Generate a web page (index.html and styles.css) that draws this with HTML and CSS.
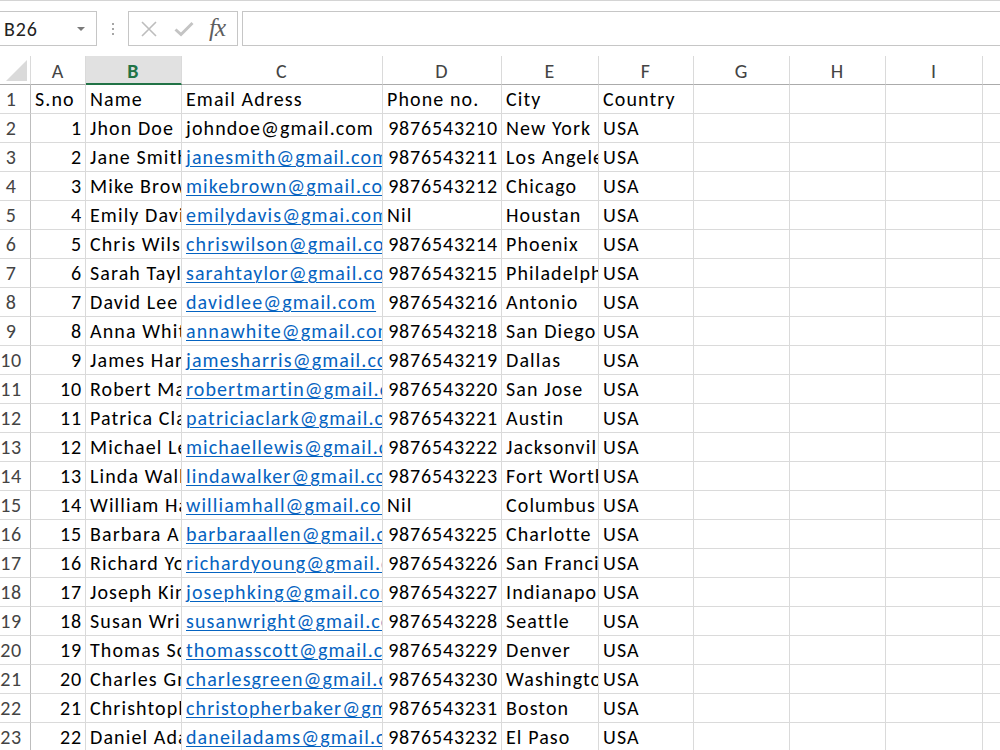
FILE: index.html
```html
<!DOCTYPE html>
<html lang="en">
<head>
    <meta charset="UTF-8">
    <meta name="viewport" content="width=device-width, initial-scale=1.0">
    <title>Contacts.xlsx</title>
    <link rel="stylesheet" href="styles.css">
</head>
<body>

    <div class="formula-bar">
        <div class="name-box">
            <span>B26</span>
            <svg class="name-arrow" width="8" height="5" viewBox="0 0 8 5"><path d="M0 0 L8 0 L4 4 Z" fill="#7a7a7a"/></svg>
        </div>
        <svg class="grip" width="4" height="14" viewBox="0 0 4 14">
            <rect x="1" y="1" width="2" height="2" fill="#a6a6a6"/>
            <rect x="1" y="6" width="2" height="2" fill="#a6a6a6"/>
            <rect x="1" y="11" width="2" height="2" fill="#a6a6a6"/>
        </svg>
        <div class="fx-buttons">
            <svg width="18" height="18" viewBox="0 0 18 18"><path d="M2 2 L16 16 M16 2 L2 16" stroke="#bdbdbd" stroke-width="1.6" fill="none"/></svg>
            <svg width="20" height="16" viewBox="0 0 20 16"><path d="M1.5 8.5 L7 13.5 L18.5 2" stroke="#c4c4c4" stroke-width="3" fill="none"/></svg>
            <span class="fx">fx</span>
        </div>
        <div class="formula-input"></div>
    </div>

    <table class="sheet">
        <thead>
            <tr>
                <th class="corner"><span class="corner-tri"></span></th>
                <th>A</th>
                <th class="selected">B</th>
                <th>C</th>
                <th>D</th>
                <th>E</th>
                <th>F</th>
                <th>G</th>
                <th>H</th>
                <th>I</th>
                <th></th>
            </tr>
        </thead>
        <tbody>
            <tr><th>1</th><td>S.no</td><td>Name</td><td>Email Adress</td><td>Phone no.</td><td>City</td><td>Country</td><td></td><td></td><td></td><td></td></tr>
            <tr><th>2</th><td class="num">1</td><td>Jhon Doe</td><td>johndoe@gmail.com</td><td class="num">9876543210</td><td>New York</td><td>USA</td><td></td><td></td><td></td><td></td></tr>
            <tr><th>3</th><td class="num">2</td><td>Jane Smith</td><td class="link">janesmith@gmail.com</td><td class="num">9876543211</td><td>Los Angeles</td><td>USA</td><td></td><td></td><td></td><td></td></tr>
            <tr><th>4</th><td class="num">3</td><td>Mike Brown</td><td class="link">mikebrown@gmail.com</td><td class="num">9876543212</td><td>Chicago</td><td>USA</td><td></td><td></td><td></td><td></td></tr>
            <tr><th>5</th><td class="num">4</td><td>Emily Davis</td><td class="link">emilydavis@gmai.com</td><td>Nil</td><td>Houstan</td><td>USA</td><td></td><td></td><td></td><td></td></tr>
            <tr><th>6</th><td class="num">5</td><td>Chris Wilson</td><td class="link">chriswilson@gmail.com</td><td class="num">9876543214</td><td>Phoenix</td><td>USA</td><td></td><td></td><td></td><td></td></tr>
            <tr><th>7</th><td class="num">6</td><td>Sarah Taylor</td><td class="link">sarahtaylor@gmail.com</td><td class="num">9876543215</td><td>Philadelphia</td><td>USA</td><td></td><td></td><td></td><td></td></tr>
            <tr><th>8</th><td class="num">7</td><td>David Lee</td><td class="link">davidlee@gmail.com</td><td class="num">9876543216</td><td>Antonio</td><td>USA</td><td></td><td></td><td></td><td></td></tr>
            <tr><th>9</th><td class="num">8</td><td>Anna White</td><td class="link">annawhite@gmail.com</td><td class="num">9876543218</td><td>San Diego</td><td>USA</td><td></td><td></td><td></td><td></td></tr>
            <tr><th>10</th><td class="num">9</td><td>James Harris</td><td class="link">jamesharris@gmail.com</td><td class="num">9876543219</td><td>Dallas</td><td>USA</td><td></td><td></td><td></td><td></td></tr>
            <tr><th>11</th><td class="num">10</td><td>Robert Martin</td><td class="link">robertmartin@gmail.com</td><td class="num">9876543220</td><td>San Jose</td><td>USA</td><td></td><td></td><td></td><td></td></tr>
            <tr><th>12</th><td class="num">11</td><td>Patrica Clark</td><td class="link">patriciaclark@gmail.com</td><td class="num">9876543221</td><td>Austin</td><td>USA</td><td></td><td></td><td></td><td></td></tr>
            <tr><th>13</th><td class="num">12</td><td>Michael Lewis</td><td class="link">michaellewis@gmail.com</td><td class="num">9876543222</td><td>Jacksonville</td><td>USA</td><td></td><td></td><td></td><td></td></tr>
            <tr><th>14</th><td class="num">13</td><td>Linda Walker</td><td class="link">lindawalker@gmail.com</td><td class="num">9876543223</td><td>Fort Worth</td><td>USA</td><td></td><td></td><td></td><td></td></tr>
            <tr><th>15</th><td class="num">14</td><td>William Hall</td><td class="link">williamhall@gmail.com</td><td>Nil</td><td>Columbus</td><td>USA</td><td></td><td></td><td></td><td></td></tr>
            <tr><th>16</th><td class="num">15</td><td>Barbara Allen</td><td class="link">barbaraallen@gmail.com</td><td class="num">9876543225</td><td>Charlotte</td><td>USA</td><td></td><td></td><td></td><td></td></tr>
            <tr><th>17</th><td class="num">16</td><td>Richard Young</td><td class="link">richardyoung@gmail.com</td><td class="num">9876543226</td><td>San Francisco</td><td>USA</td><td></td><td></td><td></td><td></td></tr>
            <tr><th>18</th><td class="num">17</td><td>Joseph King</td><td class="link">josephking@gmail.com</td><td class="num">9876543227</td><td>Indianapolis</td><td>USA</td><td></td><td></td><td></td><td></td></tr>
            <tr><th>19</th><td class="num">18</td><td>Susan Wright</td><td class="link">susanwright@gmail.com</td><td class="num">9876543228</td><td>Seattle</td><td>USA</td><td></td><td></td><td></td><td></td></tr>
            <tr><th>20</th><td class="num">19</td><td>Thomas Scott</td><td class="link">thomasscott@gmail.com</td><td class="num">9876543229</td><td>Denver</td><td>USA</td><td></td><td></td><td></td><td></td></tr>
            <tr><th>21</th><td class="num">20</td><td>Charles Green</td><td class="link">charlesgreen@gmail.com</td><td class="num">9876543230</td><td>Washington</td><td>USA</td><td></td><td></td><td></td><td></td></tr>
            <tr><th>22</th><td class="num">21</td><td>Chrishtopher Baker</td><td class="link">christopherbaker@gmail.com</td><td class="num">9876543231</td><td>Boston</td><td>USA</td><td></td><td></td><td></td><td></td></tr>
            <tr><th>23</th><td class="num">22</td><td>Daniel Adams</td><td class="link">daneiladams@gmail.com</td><td class="num">9876543232</td><td>El Paso</td><td>USA</td><td></td><td></td><td></td><td></td></tr>
        </tbody>
    </table>

</body>
</html>
```
FILE: styles.css
```css
html, body {
    margin: 0;
    padding: 0;
    background-color: #fff;
    overflow: hidden;
}
body {
    font-family: Carlito, Lato, "Liberation Sans", sans-serif;
    font-size: 20px;
    letter-spacing: 1.1px;
    color: #000;
}

/* formula bar */
.formula-bar {
    height: 56px;
    box-sizing: border-box;
    border-top: 1px solid #d4d4d4;
    padding-top: 10px;
    display: flex;
    align-items: flex-start;
}
.name-box {
    width: 98px;
    height: 35px;
    box-sizing: border-box;
    margin-left: -1px;
    border: 1px solid #c6c6c6;
    display: flex;
    align-items: center;
    justify-content: space-between;
    padding: 0 11px 0 4px;
    color: #222;
    letter-spacing: 0.9px;
}
.name-arrow { margin-top: 1px; }
.grip {
    margin: 11px 0 0 14px;
}
.fx-buttons {
    margin-left: 13px;
    width: 110px;
    height: 35px;
    box-sizing: border-box;
    border: 1px solid #c6c6c6;
    display: flex;
    align-items: center;
    padding-left: 11px;
}
.fx-buttons svg:first-child { margin-right: 16px; }
.fx-buttons svg:nth-child(2) { margin-right: 15px; }
.fx {
    font-family: "Liberation Serif", serif;
    font-style: italic;
    font-size: 25px;
    color: #5e5e5e;
    letter-spacing: -1px;
    margin-top: -2px;
}
.formula-input {
    flex: 1;
    margin-left: 4px;
    margin-right: -2px;
    height: 35px;
    box-sizing: border-box;
    border: 1px solid #c6c6c6;
}

/* grid */
.sheet {
    border-collapse: separate;
    border-spacing: 0;
    table-layout: fixed;
    width: 1083px;
}
.sheet th, .sheet td {
    box-sizing: border-box;
    height: 29px;
    padding: 0 4px 3px 4px;
    border-right: 1px solid #dadada;
    border-bottom: 1px solid #dadada;
    white-space: nowrap;
    overflow: hidden;
    vertical-align: bottom;
    line-height: 22px;
    text-align: left;
    font-weight: normal;
}
.sheet thead th {
    color: #444;
    text-align: center;
    border-bottom-color: #ababab;
    padding-bottom: 2px;
}
.sheet thead th:nth-child(1) { width: 31px; }
.sheet thead th:nth-child(2) { width: 55px; }
.sheet thead th:nth-child(3) { width: 96px; }
.sheet thead th:nth-child(4) { width: 201px; }
.sheet thead th:nth-child(5) { width: 119px; }
.sheet thead th:nth-child(6) { width: 97px; }
.sheet thead th:nth-child(7) { width: 95px; }
.sheet thead th:nth-child(8) { width: 96px; }
.sheet thead th:nth-child(9) { width: 96px; }
.sheet thead th:nth-child(10) { width: 97px; }
.sheet thead th:nth-child(11) { width: 100px; }

.sheet thead th.selected {
    background-color: #e1e1e1;
    color: #217346;
    font-weight: bold;
    border-bottom: 2px solid #217346;
    padding-bottom: 1px;
}
.sheet th.corner {
    position: relative;
    padding: 0;
}
.corner-tri {
    position: absolute;
    right: 3px;
    bottom: 3px;
    width: 0;
    height: 0;
    border-left: 21px solid transparent;
    border-bottom: 21px solid #dadada;
}
.sheet tbody th {
    color: #444;
    text-align: center;
    padding: 0 8px 3px 0;
    border-right-color: #bdbdbd;
    letter-spacing: 0.5px;
}
.sheet td.num {
    text-align: right;
    padding-right: 3px;
    letter-spacing: 0.85px;
}
.sheet td.link {
    color: #0563c1;
    text-decoration: underline;
    text-decoration-thickness: 1px;
    text-underline-offset: 2px;
}
.sheet td:last-child { border-right: none; }
```
